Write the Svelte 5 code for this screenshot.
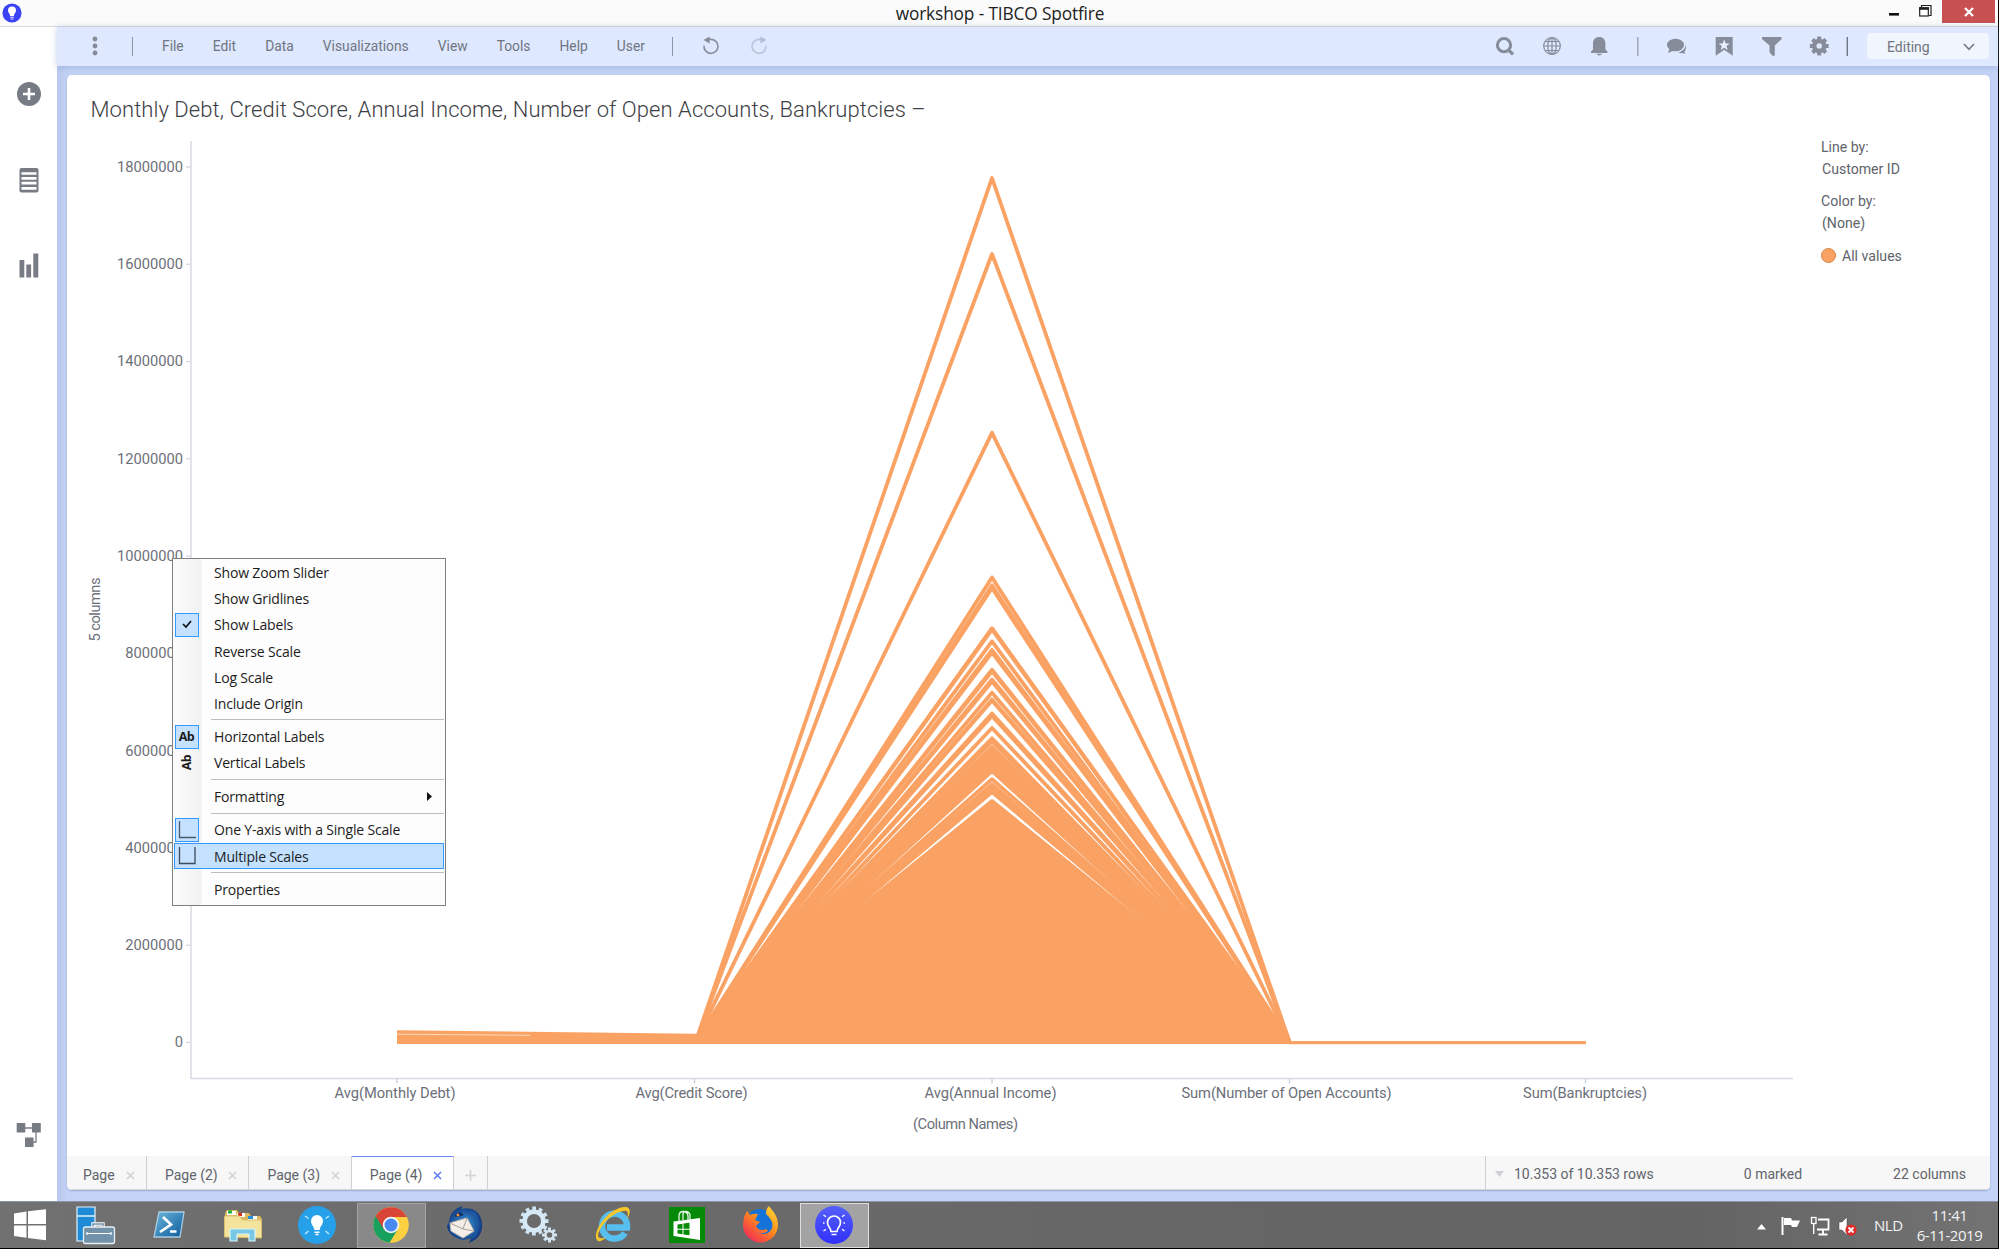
<script>
  const menus = ['File', 'Edit', 'Data', 'Visualizations', 'View', 'Tools', 'Help', 'User'];
  const base = 1042.5;
  const ticks = [0, 2, 4, 6, 8, 10, 12, 14, 16, 18].map((m) => ({
    y: base - m * 48.64,
    label: m === 0 ? '0' : `${m}000000`
  }));
  const columns = [
    { x: 397, label: 'Avg(Monthly Debt)', lx: 395, w: 121 },
    { x: 694.500, label: 'Avg(Credit Score)', lx: 691.500, w: 112 },
    { x: 992, label: 'Avg(Annual Income)', lx: 990.500, w: 132 },
    { x: 1289.5, label: 'Sum(Number of Open Accounts)', lx: 1286.500, w: 210 },
    { x: 1585.5, label: 'Sum(Bankruptcies)', lx: 1585, w: 124 }
  ];
  const peaks = [
    178, 254, 432.8, 577.4, 585.2, 588, 628.2, 629.4, 641.4, 650, 652.6, 669.8, 671.2, 679.4,
    681.5, 692.8, 699.6, 700.6, 713.5, 716, 728, 738.3, 741.5, 747, 749.5, 752, 756, 760, 764,
    768, 771, 779.2, 784.4, 788, 792, 801
  ];
  const entries = [
    { label: 'Show Zoom Slider' },
    { label: 'Show Gridlines' },
    { label: 'Show Labels', icon: 'check', boxed: true },
    { label: 'Reverse Scale' },
    { label: 'Log Scale' },
    { label: 'Include Origin' },
    { sep: true },
    { label: 'Horizontal Labels', icon: 'ab', boxed: true },
    { label: 'Vertical Labels', icon: 'abv' },
    { sep: true },
    { label: 'Formatting', sub: true },
    { sep: true },
    { label: 'One Y-axis with a Single Scale', icon: 'one', boxed: true },
    { label: 'Multiple Scales', icon: 'multi', active: true },
    { sep: true },
    { label: 'Properties' }
  ];
  const tabs = ['Page', 'Page (2)', 'Page (3)', 'Page (4)'];
  const teeth = [0, 45, 90, 135, 180, 225, 270, 315];
  const fineTeeth = Array.from({ length: 12 }, (_, i) => i * 30);
</script>

<div class="screen">
  <header class="titlebar">
    <svg class="appicon" width="20" height="20" viewBox="0 0 20 20">
      <circle cx="10" cy="10" r="9.6" fill="#3c43f5" />
      <path d="M10 3.6a4 4 0 0 0-4 4c0 2.2 1.9 3 2.1 5.3h3.8C12.100 10.600 14 9.800 14 7.600a4 4 0 0 0-4-4z" fill="#fff" />
      <path d="M8.200 14.300h3.600M8.600 16h2.800" stroke="#dfe2ff" stroke-width="1.100" />
    </svg>
    <span class="wtitle">workshop - TIBCO Spotfire</span>
    <div class="winbtns">
      <svg width="58" height="24" viewBox="1884 0 58 24">
        <path d="M1889 14.300h10" stroke="#111" stroke-width="2.600" />
        <path d="M1921.500 7.500v-2h9.500v10h-2" fill="none" stroke="#222" stroke-width="1.200" />
        <rect x="1919.700" y="8" width="8.600" height="8" fill="#fff" stroke="#222" stroke-width="1.200" />
        <path d="M1919 8.500h10" stroke="#222" stroke-width="2.600" />
      </svg>
      <div class="close">
        <svg width="12" height="12" viewBox="0 0 12 12"><path d="M2 2l8 8M10 2l-8 8" stroke="#fff" stroke-width="2.300" /></svg>
      </div>
    </div>
  </header>

  <div class="app">
    <aside class="side">
      <svg class="s1" width="26" height="26" viewBox="0 0 26 26"><circle cx="13" cy="13" r="12" fill="#777b84" /><path d="M13 7v12M7 13h12" stroke="#fff" stroke-width="2.600" /></svg>
      <svg class="s2" width="20" height="25" viewBox="0 0 20 25"><rect x="0.500" width="19" height="24.500" rx="2" fill="#777b84" /><path d="M2.500 5.500h15M2.500 10.300h15M2.500 15.100h15M2.500 20.400h15" stroke="#fff" stroke-width="2.700" /></svg>
      <svg class="s3" width="20" height="25" viewBox="0 0 20 25" fill="#777b84"><rect x="0.500" y="7" width="4.800" height="17.500" /><rect x="7.300" y="11.500" width="4.800" height="13" /><rect x="14.300" y="0.500" width="5" height="24" /></svg>
      <svg class="s4" width="26" height="26" viewBox="0 0 26 26"><path d="M8 6h10M20 8v12h-5" fill="none" stroke="#777b84" stroke-width="1.300" /><g fill="#777b84"><rect x="0.700" y="1" width="8.600" height="9.500" rx="0.600" /><rect x="16" y="1" width="8.800" height="9.500" rx="0.600" /><rect x="9" y="15.500" width="8.600" height="9.500" rx="0.600" /></g></svg>
    </aside>

    <div class="work">
      <nav class="toolbar">
        <svg class="dots" width="6" height="20" viewBox="0 0 6 20" fill="#868b97"><circle cx="3" cy="3" r="2.400" /><circle cx="3" cy="10" r="2.400" /><circle cx="3" cy="17" r="2.400" /></svg>
        <i class="div d1"></i>
        <div class="menus">
          {#each menus as m}<span>{m}</span>{/each}
        </div>
        <i class="div d2"></i>
        <svg class="undo" width="20" height="20" viewBox="0 0 20 20"><path d="M3 9.600a7 7 0 1 0 6.800-6.300H6" fill="none" stroke="#8d929e" stroke-width="1.700" /><path d="M2.500 3.900L8.600.4v7z" fill="#868b97" /></svg>
        <svg class="redo" width="20" height="20" viewBox="0 0 20 20"><path d="M17 9.600a7 7 0 1 1-6.800-6.300H14" fill="none" stroke="#bcc5d9" stroke-width="1.700" /><path d="M17.500 3.900L11.400.4v7z" fill="#b4bdd2" /></svg>
        <div class="tools">
          <svg width="440" height="38" viewBox="1480 27 440 38" fill="#868c99">
            <circle cx="1504" cy="45.200" r="6.600" fill="none" stroke="#868c99" stroke-width="3" /><path d="M1508 49.500l5 4.800" stroke="#868c99" stroke-width="3.200" />
            <g fill="none" stroke="#868c99" stroke-width="1.200"><circle cx="1552" cy="46" r="8.300" /><ellipse cx="1552" cy="46" rx="4.200" ry="8.300" /><path d="M1552 37.500v17M1543.500 46h17M1545 41.500h14M1545 50.500h14" /></g>
            <path d="M1591 53v-1.500l2-2V43.500c0-4 2.500-6.500 6.200-6.500s6.200 2.500 6.200 6.500v6l2 2V53zM1596.700 53.800h5c-.3 2.300-4.700 2.300-5 0z" />
            <path d="M1637.800 37v19" stroke="#8f97a8" stroke-width="1.200" />
            <ellipse cx="1675.500" cy="45" rx="8.500" ry="6.300" /><path d="M1670 48l-2.200 5 6.200-2.500z" />
            <path d="M1685 43.500c1.200 3.500-1 7.500-6.500 8.800 1.600 1.200 3.300 1.100 4.400.7l2.300 1-.7-2.300c1.500-2 2-4.700.5-8.200z" />
            <path d="M1715.700 37h17v18.700l-8.500-6-8.500 6z" /><path d="M1724.200 39.500l1.500 3.900h4l-3.200 2.600 1.200 4-3.500-2.300-3.500 2.300 1.200-4-3.200-2.600h4z" fill="#eaf0ff" />
            <path d="M1762 37h19.500v2l-6.700 6.500v10.300h-2.300l-3-3.500V45.500l-7.500-6.500z" />
            <g><circle cx="1819.200" cy="46" r="5" fill="none" stroke="#868c99" stroke-width="4.600" />{#each teeth as t}<rect x="1817.200" y="36.600" width="4" height="4" transform="rotate({t} 1819.200 46)" />{/each}</g>
            <path d="M1847.300 37v19" stroke="#666d7c" stroke-width="1.300" />
          </svg>
        </div>
        <div class="mode"><span>Editing</span><svg width="12" height="8" viewBox="0 0 12 8"><path d="M1 1l5 5.300L11 1" fill="none" stroke="#777d88" stroke-width="1.700" /></svg></div>
      </nav>

      <main class="panel">
        <h1>Monthly Debt, Credit Score, Annual Income, Number of Open Accounts, Bankruptcies –</h1>
        <div class="viz">
          <svg class="chart" width="1743" height="1021" viewBox="67 135 1743 1021">
            <path d="M191 141v937.500h1602" fill="none" stroke="#d8dae1" stroke-width="1.500" />
            {#each ticks as t}
              <path d="M186 {t.y}h5" stroke="#d8dae1" stroke-width="1.300" />
              <text class="lbl" x="183" y={t.y + 4.900} text-anchor="end">{t.label}</text>
            {/each}
            {#each columns as c}
              <path d="M{c.x} 1079v4.500" stroke="#c9cfd8" stroke-width="1.300" />
              <text class="lbl" x={c.lx} y="1098.300" text-anchor="middle" textLength={c.w}>{c.label}</text>
            {/each}
            <text class="lbl" x="965.500" y="1129" text-anchor="middle" textLength="105">(Column Names)</text>
            <text class="lbl" transform="translate(99.500 609.500) rotate(-90)" text-anchor="middle" textLength="64">5 columns</text>
            <g fill="#faa264" stroke="#faa264" stroke-linejoin="round">
              <path d="M397 1030.200L696 1033.800V1044H397z" stroke="none" />
              <path d="M696 1034.300L992 801L1289.500 1042V1044H696z" stroke="none" />
              {#each peaks as p}
                <path d="M695.700 1041.500L992 {p}L1289.500 1041.800" fill="none" stroke-width="3.800" />
              {/each}
              <path d="M1289 1042.600H1586" stroke-width="3.200" />
            </g>
            <path d="M397 1034.200L530 1035.300" stroke="#fddcc4" stroke-width="0.900" />
          </svg>
          <div class="legend">
            <span>Line by:</span><span class="val">Customer ID</span>
            <span class="second">Color by:</span><span class="val">(None)</span>
            <div class="all"><i></i>All values</div>
          </div>
        </div>
        <footer class="status">
          {#each tabs as t, i}
            <div class="tab" class:first={i === 0} class:on={i === 3}><span>{t}</span><svg width="9" height="9" viewBox="0 0 9 9"><path d="M1 1l7 7M8 1L1 8" stroke={i === 3 ? '#5a78f2' : '#d0d1d5'} stroke-width="1.500" /></svg></div>
          {/each}
          <div class="add"><svg width="11" height="11" viewBox="0 0 11 11"><path d="M5.500 0v11M0 5.500h11" stroke="#d3d4d8" stroke-width="1.700" /></svg></div>
          <div class="info">
            <svg width="9" height="6" viewBox="0 0 9 6"><path d="M0 0h9L4.500 6z" fill="#cfd0d4" /></svg>
            <span class="rows">10.353 of 10.353 rows</span><span class="marked">0 marked</span><span>22 columns</span>
          </div>
        </footer>
      </main>
    </div>
  </div>

  <div class="context">
    {#each entries as e}
      {#if e.sep}
        <hr />
      {:else}
        <div class="entry" class:active={e.active}>
          <span class="ico" class:boxed={e.boxed}>
            {#if e.icon === 'check'}<svg width="10" height="9" viewBox="0 0 10 9"><path d="M1 4l3 3 5-6" fill="none" stroke="#111" stroke-width="1.700" /></svg>
            {:else if e.icon === 'ab'}<b>Ab</b>
            {:else if e.icon === 'abv'}<b class="vert">Ab</b>
            {:else if e.icon === 'one'}<svg width="18" height="18" viewBox="0 0 18 18"><path d="M1.500 0v16.500H18" fill="none" stroke="#4d5b69" stroke-width="1.300" /></svg>
            {:else if e.icon === 'multi'}<svg width="18" height="18" viewBox="0 0 18 18"><path d="M1.500 0v16.500H17V0" fill="none" stroke="#3b4b5b" stroke-width="1.300" /></svg>{/if}
          </span>
          <span class="txt">{e.label}</span>
          {#if e.sub}<svg class="arrow" width="5" height="9" viewBox="0 0 5 9"><path d="M0 0l5 4.500L0 9z" fill="#111" /></svg>{/if}
        </div>
      {/if}
    {/each}
  </div>

  <div class="taskbar">
    <svg class="start" width="57" height="46" viewBox="0 1202 57 46"><path d="M14 1213.500l12.500-2v12.500H14zM28 1211.200l18-2V1224H28zM14 1225.500h12.500v12.300L14 1236zM28 1225.500h18v14.700l-18-2.200z" fill="#fff" /></svg>
    <div class="slot">
      <svg width="42" height="40" viewBox="0 0 42 40"><path d="M2 2h18v34H2z" fill="#1f8ad6" stroke="#e6f2fb" stroke-width="1.200" /><path d="M2 11h18" stroke="#e6f2fb" stroke-width="1.500" /><path d="M18 22v-3h10v3" fill="none" stroke="#fff" stroke-width="3.400" /><path d="M18 22v-3h10v3" fill="none" stroke="#7292aa" stroke-width="1.600" /><rect x="8.500" y="22" width="31" height="16.500" rx="2" fill="#7292aa" stroke="#e9eff4" stroke-width="1.300" /><path d="M12 28.500h24M12 27v3M36 27v3" stroke="#fff" stroke-width="1.200" fill="none" /></svg>
    </div>
    <div class="slot">
      <svg width="36" height="30" viewBox="0 0 36 30"><defs><linearGradient id="ps" x2="1" y2="1"><stop stop-color="#6db7dd" /><stop offset="1" stop-color="#0a5a9c" /></linearGradient></defs><path d="M8 2h25l-4 25H3z" fill="url(#ps)" stroke="#a9cbe0" stroke-width="1.300" /><path d="M12 7l8 7.500L9 22" fill="none" stroke="#fff" stroke-width="2.700" /><path d="M19 21.500h6.500" stroke="#fff" stroke-width="2.500" /></svg>
    </div>
    <div class="slot">
      <svg width="40" height="36" viewBox="0 0 40 36"><path d="M2 6l2-3h10l2 3h10l2 3h9l2 3v17H2z" fill="#d9b95c" /><path d="M4 4h9v4H4zM14 6h8v4h-8zM25 9h9v4h-9z" fill="#fff" /><path d="M5 3.500h4v3H5z" fill="#19b13a" /><path d="M15 6h4v3h-4z" fill="#dd3222" /><path d="M25 9h5v3h-5z" fill="#2590df" /><path d="M1.500 9h15l3 4h19v18l-37-1z" fill="#f3e39d" stroke="#d8bf6c" /><path d="M7 34V22h25v12h-6v-7H14v7z" fill="#76c8e4" stroke="#d7f3fb" stroke-width="1.200" /></svg>
    </div>
    <div class="slot">
      <svg width="40" height="40" viewBox="0 0 40 40"><circle cx="20" cy="20" r="19" fill="#27a0ea" /><path d="M20 10a6 6 0 0 0-6 6c0 4 3 5 3.300 9h5.400c.3-4 3.300-5 3.300-9a6 6 0 0 0-6-6z" fill="#fff" /><path d="M17.500 27.300h5M18.500 29.500h3" stroke="#fff" stroke-width="1.500" /><path d="M8 11l3.500 2.500M32 11l-3.500 2.500M8 29l3.500-3M32 29l-3.500-3" stroke="#bde4fb" stroke-width="1.500" /></svg>
    </div>
    <div class="slot open">
      <svg width="38" height="38" viewBox="0 0 38 38"><circle cx="19" cy="19" r="17.800" fill="#fdd041" /><path d="M19 19L3.600 10.100A17.800 17.800 0 0 0 17.500 36.750L26 23z" fill="#17a05e" /><path d="M3.600 10.100A17.800 17.800 0 0 1 34.600 10.400L35 11H19l-7.200 12z" fill="#da4437" /><circle cx="19" cy="19" r="8.300" fill="#f4f4f4" /><circle cx="19" cy="19" r="6.500" fill="#4889f4" /></svg>
    </div>
    <div class="slot">
      <svg width="40" height="40" viewBox="0 0 40 40"><defs><radialGradient id="tb"><stop stop-color="#3f9ce0" /><stop offset="1" stop-color="#113a80" /></radialGradient></defs><path d="M4 17C5 8 10 3 18 1l-2 3c11-3 20 3 21 14 1 9-3 16-13 20l2-5C16 38 3 31 2 21z" fill="url(#tb)" /><path d="M5 18l17-5 7 13-11 7L6 26z" fill="#f3eee7" stroke="#c5bdb4" /><path d="M5 18l13 6 4-11M18 24l11 2" fill="none" stroke="#a89e94" /><path d="M9 11l6-4 4 3-6 2z" fill="#0e2c61" /><circle cx="13" cy="10" r="1.500" fill="#ef8b45" /><path d="M29 7q8 12-1 26M25 6q8 6 7 14" stroke="#1c5aa2" fill="none" stroke-width="2" /></svg>
    </div>
    <div class="slot">
      <svg width="40" height="40" viewBox="0 0 40 40"><g fill="#cfe3f2">{#each fineTeeth as t}<rect x="13.200" y="1.500" width="3.800" height="6" transform="rotate({t} 15 16)" />{/each}{#each teeth as t}<rect x="29" y="22.500" width="3" height="4" transform="rotate({t} 30.500 30)" />{/each}</g><circle cx="15" cy="16" r="9.300" fill="#6b6b6b" stroke="#d5e9f6" stroke-width="4.500" /><circle cx="30.500" cy="30" r="4" fill="#6b6b6b" stroke="#d7e4ee" stroke-width="2.400" /></svg>
    </div>
    <div class="slot">
      <svg width="40" height="40" viewBox="0 0 40 40"><path d="M32 28A12.500 12.500 0 1 1 34 22.500H14" fill="none" stroke="#57bff0" stroke-width="6.500" /><path d="M5 36C-3 31 13 3 32 2c7 0 5 8 2 12 1-4 2-9-3-8C19 7 7 21 5 30c0 4 4 4 8 2-2 3-6 5-8 4z" fill="#f6c52a" /></svg>
    </div>
    <div class="slot">
      <svg width="36" height="36" viewBox="0 0 36 36"><path d="M0 0h36v36H0z" fill="#048a04" /><path d="M4.500 14.500L31 11v22L4.500 29z" fill="#fff" /><path d="M10 14V9c0-6 8-6 9 0v4M14 13V7c1-4 6-3 7 1v5" fill="none" stroke="#e4f3e4" stroke-width="1.300" /><path d="M8.500 17.500l5-.7v5h-5zM14.500 16.600l6-.8v6h-6zM8.500 22.800h5v4.500l-5-.7zM14.500 22.800h6v5.500l-6-.9z" fill="#048a04" /></svg>
    </div>
    <div class="slot">
      <svg width="40" height="40" viewBox="0 0 40 40"><defs><linearGradient id="ff" x1="1" x2="0.200" y2="1"><stop stop-color="#ffe63a" /><stop offset="0.500" stop-color="#ff8a1c" /><stop offset="1" stop-color="#f1265b" /></linearGradient></defs><circle cx="19" cy="18" r="14" fill="#1473d8" /><path d="M3 12l3-6 3 4q4-2 8-1l-3 6 5 2-4 4q3 6 10 3l2 2q-5 4-11 1 9 5 14-2c4-7-1-12-5-16 0-4 1-6 3-8 2 4 9 8 9 19a17.500 17.500 0 0 1-35 0z" fill="url(#ff)" /></svg>
    </div>
    <div class="slot current">
      <svg width="40" height="40" viewBox="0 0 40 40"><defs><linearGradient id="sf" x2="0" y2="1"><stop stop-color="#5560fb" /><stop offset="1" stop-color="#3030f8" /></linearGradient></defs><circle cx="20" cy="20" r="19" fill="url(#sf)" /><path d="M17 26.500c0-3.500-3.500-4.500-3.500-9a6.500 6.500 0 0 1 13 0c0 4.500-3.500 5.500-3.500 9zM17.500 29.500h5" fill="none" stroke="#fff" stroke-width="1.700" /><path d="M9.500 10l2.500 1.800M30.500 10L28 11.800M9.500 26l2.500-1.800M30.500 26L28 24.200M9 18h1.500M31 18h-1.500" stroke="#fff" stroke-width="1.400" /></svg>
    </div>
    <div class="tray">
      <svg width="106" height="40" viewBox="1752 1205 106 40"><path d="M1757 1229.500l4.500-5.500 4.500 5.500z" fill="#fff" /><path d="M1782.500 1217v18" stroke="#fff" stroke-width="2" /><path d="M1784 1218h7l1 2.500h8l-3 6.500h-5l-1-2h-7z" fill="#fff" /><path d="M1818 1219.500h10.500v10H1817M1823 1230v4M1818.500 1234.500h9" fill="none" stroke="#fff" stroke-width="1.800" /><rect x="1811.500" y="1217.500" width="4.500" height="6" fill="#6e6e6e" stroke="#fff" stroke-width="1.300" /><path d="M1813.700 1224v10" stroke="#fff" stroke-width="1.400" /><path d="M1839 1222h3l5-5v18l-5-5h-3z" fill="#fff" stroke="#444" stroke-width="0.500" /><circle cx="1851" cy="1230" r="5.600" fill="#e02a2a" /><path d="M1848.500 1227.500l5 5M1853.500 1227.500l-5 5" stroke="#fff" stroke-width="1.800" /></svg>
      <span class="lang">NLD</span>
      <div class="clock"><span>11:41</span><span>6-11-2019</span></div>
    </div>
  </div>
</div>

<style>
  :global(body) { background: #000; overflow: hidden; }
  * { box-sizing: border-box; }
  svg { display: block; flex: none; }
  .screen { position: relative; width: 1999px; height: 1249px; display: flex; flex-direction: column; font-family: Roboto, sans-serif; font-size: 14px; color: #61646b; background: #000; }
  .titlebar { height: 27px; width: 1998px; background: #fbfbfb; border-bottom: 1px solid #d9d9d6; display: flex; justify-content: space-between; align-items: flex-start; }
  .appicon { margin: 3px 0 0 2px; width: 20px; }
  .wtitle { font: 17.300px/28px "Open Sans", sans-serif; letter-spacing: -0.140px; color: #222; margin-left: 94px; }
  .winbtns { display: flex; }
  .close { width: 53px; height: 23px; margin-right: 3px; background: #c75050; display: flex; align-items: center; justify-content: center; }
  .app { height: 1174px; width: 1998px; display: flex; background: #c3d2f6; }
  .side { width: 57px; background: #fff; display: flex; flex-direction: column; align-items: center; padding-top: 54px; }
  .s2 { margin-top: 61px; }
  .s3 { margin-top: 60px; }
  .s4 { margin-top: auto; margin-bottom: 53px; }
  .work { flex: 1; display: flex; flex-direction: column; background: linear-gradient(90deg, #b8c8ec 0, #c4d3f7 12px, #c4d3f7 100%); }
  .toolbar { height: 38.500px; background: #dee8ff; display: flex; align-items: center; box-shadow: 0 1px 7px rgba(120, 145, 205, 0.450); color: #707581; }
  .dots { margin-left: 35px; }
  .div { width: 1px; height: 19px; background: #8e96a6; }
  .d1 { margin-left: 34px; }
  .menus { display: flex; margin-left: 29px; width: 483px; justify-content: space-between; font-size: 13.800px; }
  .d2 { margin-left: 27px; }
  .undo { margin-left: 28px; }
  .redo { margin-left: 28px; }
  .tools { margin-left: auto; width: 387px; }
  .mode { width: 122px; height: 26px; margin-right: 9px; border-radius: 4px; background: #f1f5fe; display: flex; align-items: center; justify-content: space-between; padding: 1px 14px 0 20px; z-index: 1; }
  .panel { margin: 9.500px 8px 11px 10px; flex: 1; background: #fff; border-radius: 5px; display: flex; flex-direction: column; overflow: hidden; box-shadow: 0 1px 2px rgba(90, 110, 160, 0.400); }
  h1 { margin: 0; padding-left: 23.500px; height: 60px; font: 300 22px/69px Roboto, sans-serif; letter-spacing: 0.060px; color: #3d4045; white-space: nowrap; }
  .viz { display: flex; height: 1021px; }
  .lbl { font: 14.700px Roboto, sans-serif; fill: #6c6f79; }
  .legend { display: flex; flex-direction: column; margin: 1px 0 0 11px; line-height: 22.300px; font-size: 14.100px; white-space: nowrap; }
  .val { margin-left: 1px; }
  .second { margin-top: 9px; }
  .all { display: flex; align-items: center; gap: 6px; margin-top: 10.500px; }
  .all i { width: 15px; height: 15px; border-radius: 50%; background: #faa264; border: 1px solid #d58342; }
  .status { height: 34px; background: #f7f7f7; border-bottom: 1px solid #d6d6d8; display: flex; white-space: nowrap; }
  .tab { width: 102.400px; border-right: 1px solid #cfd0d3; display: flex; align-items: center; justify-content: space-between; padding: 5px 11px 0 18px; }
  .tab.first { width: 80px; padding-left: 16px; }
  .tab.on { background: #fff; border-top: 1px solid #6b8af5; padding-top: 4px; }
  .add { width: 33.500px; border-right: 1px solid #cfd0d3; display: flex; align-items: center; justify-content: center; padding-top: 5px; }
  .info { margin-left: auto; width: 505px; border-left: 1px solid #cfd0d3; display: flex; align-items: center; padding: 2px 24px 0 9px; }
  .rows { margin-left: 10px; }
  .marked { margin-left: auto; margin-right: 91px; }
  .context { position: absolute; left: 171.500px; top: 558px; width: 274.500px; height: 347.500px; border: 1px solid #7f7f7f; padding: 0.500px 1px; background: linear-gradient(90deg, #fcfcfc 0, #f1f1f1 28px, #fdfdfd 29px); display: flex; flex-direction: column; font: 14px "Open Sans", sans-serif; letter-spacing: -0.170px; color: #1c1c1c; }
  .entry { flex: none; height: 26.170px; display: flex; align-items: center; border: 1px solid transparent; padding-right: 11px; white-space: nowrap; }
  .entry.active { background: #c4e1ff; border-color: #3399ff; }
  .ico { width: 24px; height: 24px; border: 1px solid transparent; display: flex; align-items: center; justify-content: center; }
  .ico.boxed { background: #c4e1ff; border-color: #3399ff; }
  .ico b { font: 700 12.500px "Open Sans", sans-serif; letter-spacing: -0.500px; }
  .vert { transform: rotate(-90deg); }
  .txt { margin-left: 15.500px; }
  .arrow { margin-left: auto; }
  hr { margin: 3px 0 3.300px 37px; border: 0; height: 1px; background: #bdbdbd; flex: none; }
  .taskbar { height: 47px; width: 1998px; background: linear-gradient(90deg, #717171 0, #6c6c6c 20%, #666 60%, #646464 85%, #737373 100%); border-top: 1px solid #8b95aa; display: flex; align-items: center; color: #f3f3f3; }
  .slot { width: 69px; height: 45px; margin-right: 4.900px; display: flex; align-items: center; justify-content: center; border: 1px solid transparent; }
  .start { margin-right: 4px; }
  .open { background: #898989; border-color: #a5a5a5; }
  .current { background: #a3a3a3; border-color: #dedede; }
  .tray { margin-left: auto; margin-right: 17px; display: flex; align-items: center; font: 15px/20.500px "Open Sans", sans-serif; letter-spacing: -0.450px; }
  .lang { margin-left: 16px; width: 28px; }
  .clock { margin-left: 16px; display: flex; flex-direction: column; align-items: center; width: 63px; white-space: nowrap; }
</style>
